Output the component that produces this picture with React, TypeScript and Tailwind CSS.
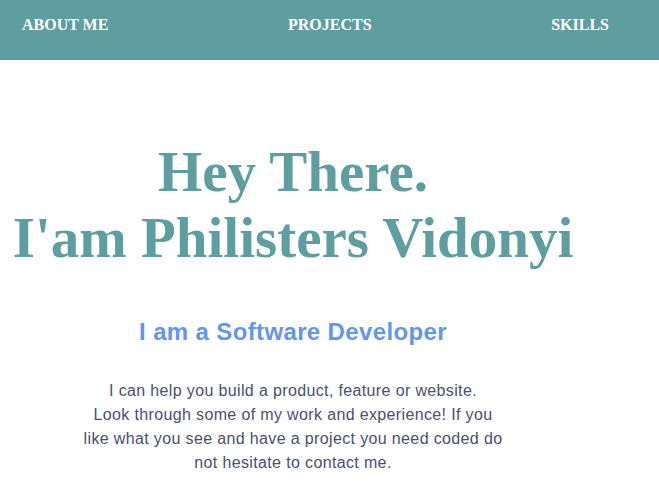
export default function App() {
  return (
    <div className="min-h-screen bg-white">
      <nav className="flex h-[60px] items-start justify-between bg-[#5f9ea0] pl-[22px] pr-[50px] pt-[13px] font-['Liberation_Serif',serif] text-base font-bold text-white">
        <a href="#about">ABOUT ME</a>
        <a href="#projects">PROJECTS</a>
        <a href="#skills">SKILLS</a>
      </nav>
      <main className="w-[586px] text-center">
        <h1 className="mt-[79px] font-['Liberation_Serif',serif] text-[57px] leading-[1.15] font-bold text-[#5f9ea0]">
          Hey There.
          <br />
          I'am Philisters Vidonyi
        </h1>
        <h2 className="mt-[48px] font-['Liberation_Sans',sans-serif] text-2xl leading-[1.15] font-bold tracking-[0.36px] text-[#6495ed]">
          I am a Software Developer
        </h2>
        <p className="mt-[33px] font-['Liberation_Sans',sans-serif] text-base leading-6 tracking-[0.36px] text-[#4b4f6b]">
          I can help you build a product, feature or website.
          <br />
          Look through some of my work and experience! If you
          <br />
          like what you see and have a project you need coded do
          <br />
          not hesitate to contact me.
        </p>
      </main>
    </div>
  );
}
